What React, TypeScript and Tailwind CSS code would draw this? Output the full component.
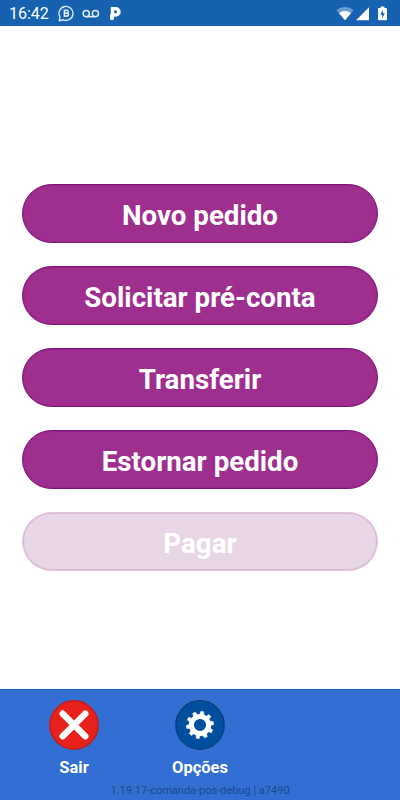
interface MenuItem {
  label: string
  disabled?: boolean
}

const items: MenuItem[] = [
  { label: 'Novo pedido' },
  { label: 'Solicitar pré-conta' },
  { label: 'Transferir' },
  { label: 'Estornar pedido' },
  { label: 'Pagar', disabled: true },
]

const teeth = [10, 46, 82, 118, 154, 190, 226, 262, 298, 334]

function StatusBar() {
  return (
    <header className="flex h-[26px] shrink-0 items-center justify-between bg-[#1661b0] pl-[9px] pr-[13px] pt-px text-white">
      <div className="flex items-center">
        <span className="w-[49px] text-[16px] leading-none">16:42</span>
        {/* WhatsApp Business */}
        <svg width="17" height="17" viewBox="0 0 17 17" fill="none" stroke="#dce8f5" strokeWidth="1.4">
          <path d="M1.3 15.7l.6-3.9A7 7 0 1 1 5.2 14.8z" strokeLinejoin="round" />
          <path d="M6.4 5.2h2.3a1.45 1.45 0 0 1 0 2.9H6.4zM6.4 8.1h2.6a1.5 1.5 0 0 1 0 3H6.4z" strokeWidth="1.6" />
        </svg>
        {/* Voicemail */}
        <svg className="ml-[7px]" width="18" height="10" viewBox="0 0 18 10" fill="none" stroke="#e3edf8" strokeWidth="1.5">
          <circle cx="4.2" cy="4.6" r="3.1" />
          <circle cx="13.4" cy="4.6" r="3.1" />
          <path d="M4.2 7.7h9.2" />
        </svg>
        {/* Payment app */}
        <svg className="ml-[9px]" width="13" height="15" viewBox="0 0 13 15" fill="white">
          <path fillRule="evenodd" d="M2.4 1h4.4a4.9 4.9 0 0 1 0 9.8H5V12.3a2 2 0 0 1-4 0V8.5h.8V1.6a.6.6 0 0 1 .6-.6zM5.3 4.3v3h1.2a1.5 1.5 0 0 0 0-3z" />
        </svg>
      </div>
      <div className="flex items-center">
        <svg width="18" height="15" viewBox="0 0 18 15">
          <path d="M.4 4.2A13.5 13.5 0 0 1 17.6 4.2L9 14.3z" fill="#6c9fd0" />
          <path d="M3 7.2A9.5 9.5 0 0 1 15 7.2L9 14.3z" fill="white" />
        </svg>
        <svg className="ml-[2px]" width="14" height="15" viewBox="0 0 14 15">
          <path d="M13 1.2V14.2H0z" fill="white" />
        </svg>
        <svg className="ml-[8px]" width="9" height="15" viewBox="0 0 9 15">
          <path d="M2.6.5h3.8v1.4H8a1 1 0 0 1 1 1v10.4a1 1 0 0 1-1 1H1a1 1 0 0 1-1-1V2.9a1 1 0 0 1 1-1h1.6z" fill="white" />
          <path d="M5 4L2.2 8.8h1.9v3.4l2.7-5H5z" fill="#1661b0" />
        </svg>
      </div>
    </header>
  )
}

function MenuButton({ label, disabled }: MenuItem) {
  return (
    <button
      disabled={disabled}
      className={`flex h-[59.5px] w-full items-center justify-center rounded-full border pt-[4px] text-[27.7px] font-bold leading-none text-white ${
        disabled
          ? 'border-[#dfc3dc] bg-[#e8d5e6] shadow-[inset_0_0_0_1px_#d9b9d6]'
          : 'border-[#82107a] bg-[#9f2f8f] shadow-[inset_0_0_1px_1px_#92218590]'
      }`}
    >
      {label}
    </button>
  )
}

function CloseIcon() {
  return (
    <svg width="50" height="50" viewBox="0 0 50 50">
      <circle cx="25" cy="25" r="24.2" fill="#e8211d" stroke="#c21b1f" strokeWidth="1.4" />
      <path d="M13.7 13.7l22.6 22.6M36.3 13.7l-22.6 22.6" stroke="white" strokeWidth="6.4" strokeLinecap="round" />
    </svg>
  )
}

function GearIcon() {
  return (
    <svg width="50" height="50" viewBox="0 0 50 50">
      <circle cx="25" cy="25" r="24.2" fill="#004f9f" stroke="#074080" strokeWidth="1.4" />
      <circle cx="25" cy="25" r="8.6" fill="none" stroke="white" strokeWidth="5" />
      {teeth.map((angle) => (
        <path key={angle} d="M22.9 15.5L23.5 11.4h3l.6 4.1z" fill="white" stroke="white" strokeWidth=".5" strokeLinejoin="round" transform={`rotate(${angle} 25 25)`} />
      ))}
    </svg>
  )
}

export default function App() {
  return (
    <div className="flex h-[800px] w-[400px] flex-col overflow-hidden bg-white font-[Roboto,sans-serif]">
      <StatusBar />

      <main className="flex flex-1 flex-col justify-center gap-[22.5px] px-[22px] pt-[40px]">
        {items.map((item) => (
          <MenuButton key={item.label} {...item} />
        ))}
      </main>

      <footer className="flex h-[111px] shrink-0 flex-col border-t border-[#1763bd] bg-[#336fd2] pt-[10px]">
        <div className="flex pl-[11px]">
          <button className="flex w-[126px] flex-col items-center">
            <CloseIcon />
            <span className="mt-[9px] text-[16.5px] font-bold leading-[18px] text-white">Sair</span>
          </button>
          <button className="flex w-[126px] flex-col items-center">
            <GearIcon />
            <span className="mt-[9px] text-[16.5px] font-bold leading-[18px] text-white">Opções</span>
          </button>
        </div>
        <p className="mt-[7px] text-center text-[11px] leading-[14px] text-[#164b91]">
          1.19.17-comanda-pos-debug | a7490
        </p>
      </footer>
    </div>
  )
}
